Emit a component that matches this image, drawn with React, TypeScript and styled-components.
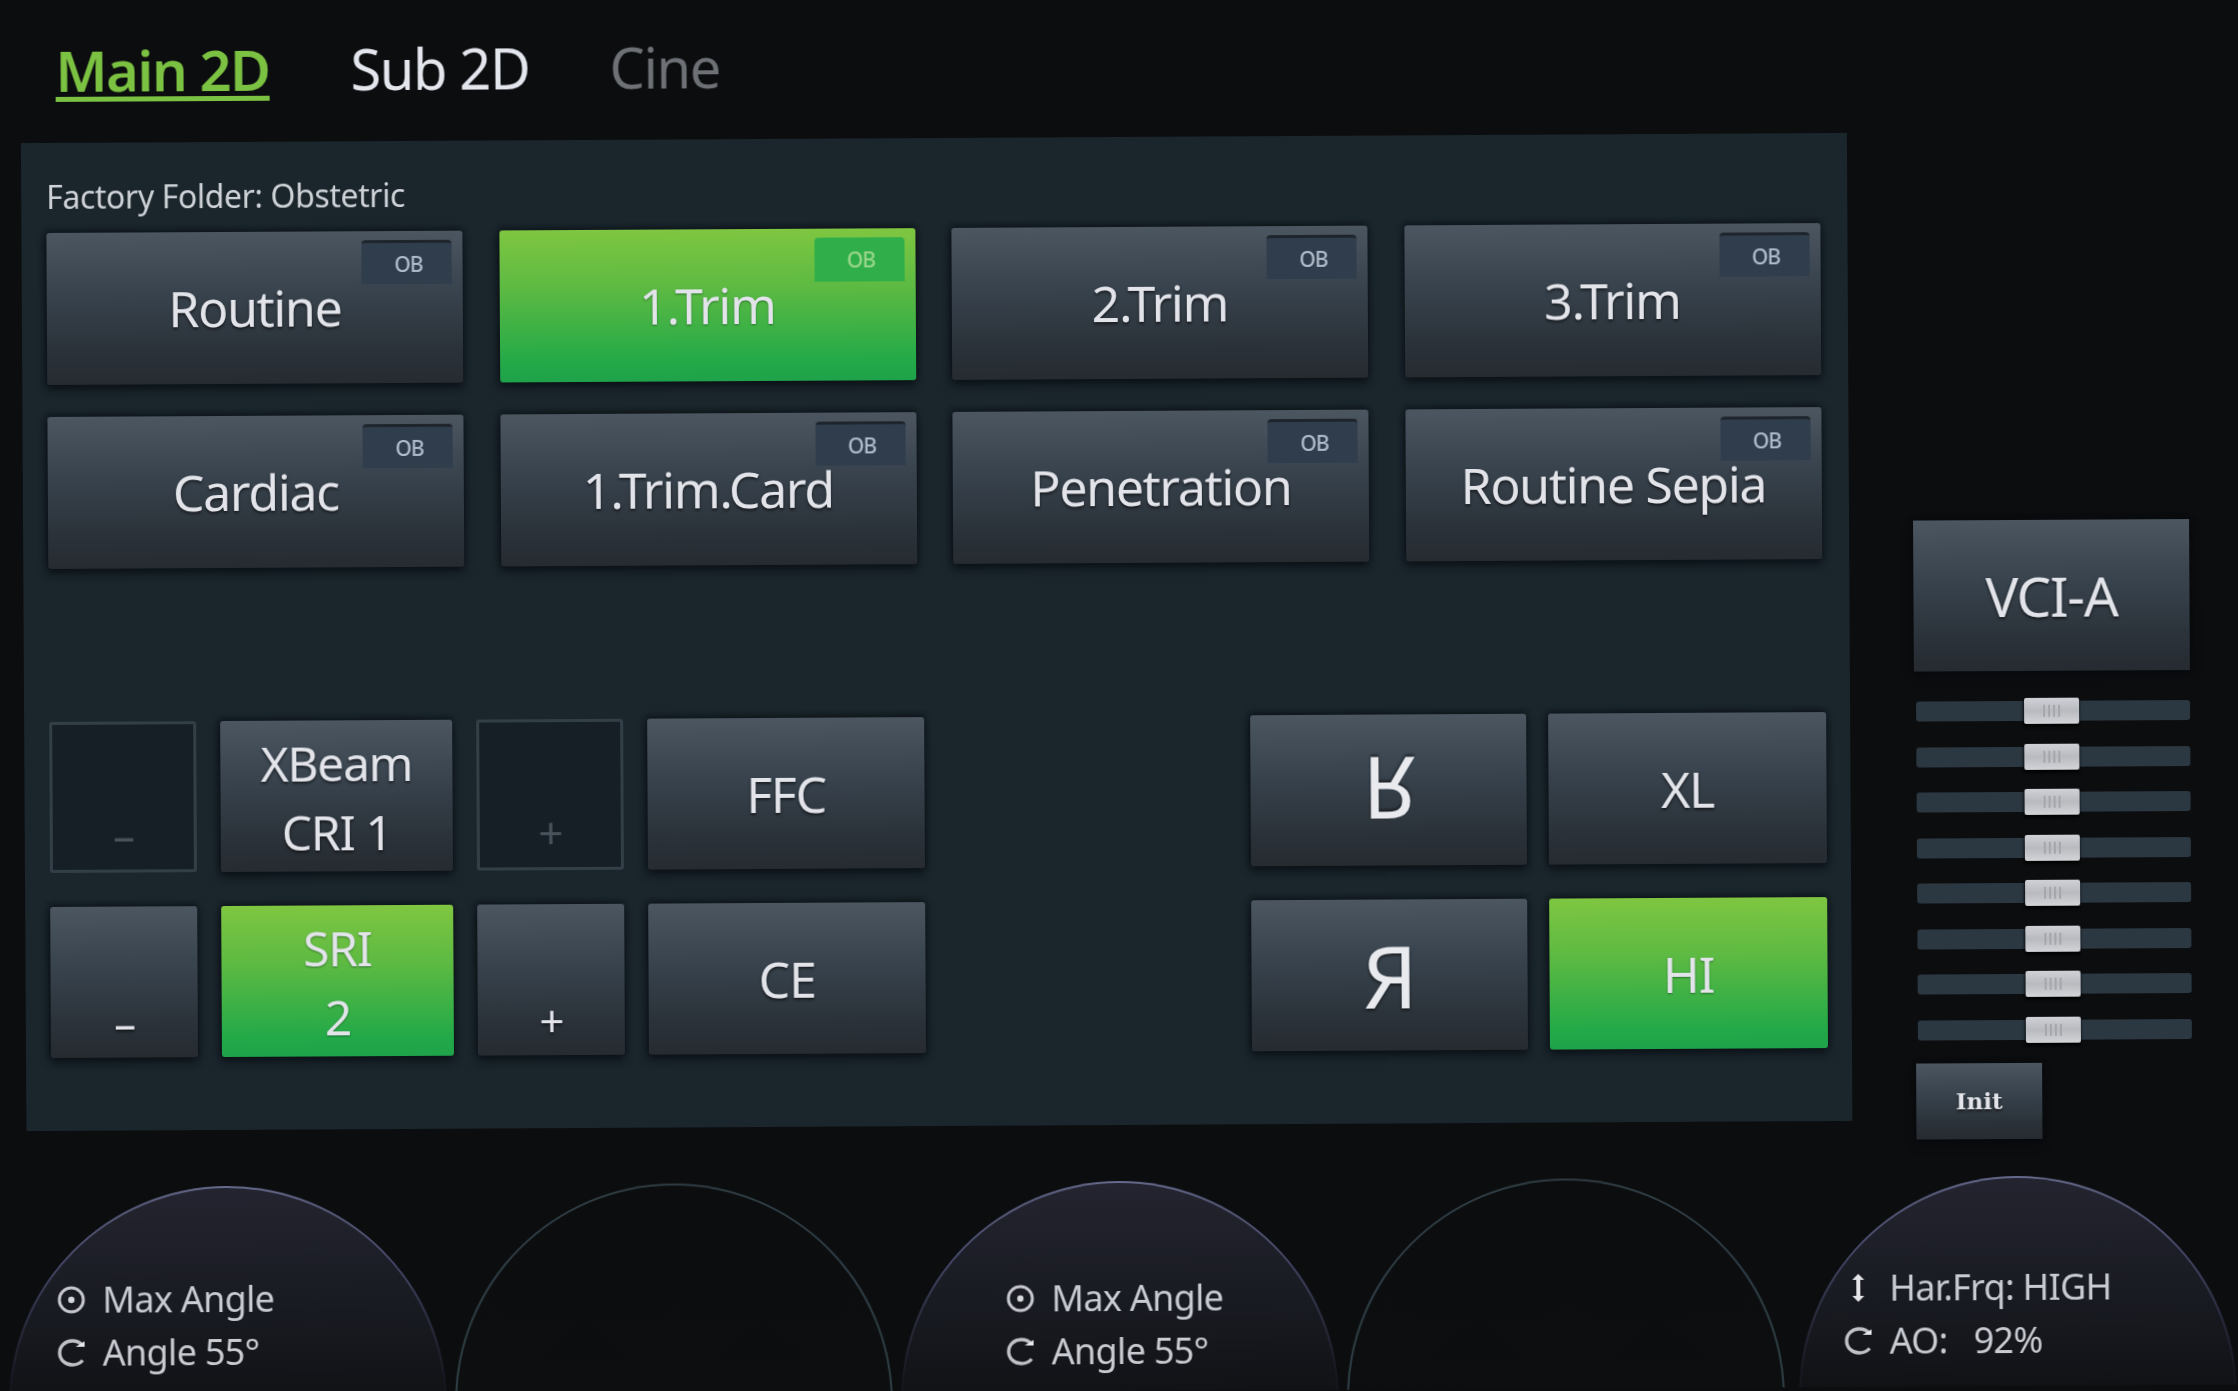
import React from "react";
import styled, { createGlobalStyle, css } from "styled-components";

const GlobalStyle = createGlobalStyle`
  html, body {
    margin: 0;
    padding: 0;
    background: #0c0d0f;
    overflow: hidden;
  }
  body {
    font-family: "Noto Sans", "Open Sans", sans-serif;
  }
`;

// the source is a slightly tilted photo of the screen, so the whole page leans a bit
const Stage = styled.div`
  width: 2238px;
  height: 1391px;
  display: flex;
  flex-direction: column;
  overflow: hidden;
  background: #0c0d0f;
  color: #e6e8ee;
  transform: rotate(-0.32deg);
  transform-origin: center;
  filter: blur(0.7px);
`;

const TopArea = styled.div`
  display: flex;
  height: 1181px;
  flex: none;
`;

const LeftColumn = styled.div`
  display: flex;
  flex-direction: column;
  width: 1889px;
  flex: none;
`;

const Tabs = styled.div`
  display: flex;
  height: 137px;
  padding: 34px 0 0 59px;
  box-sizing: border-box;
`;

const Tab = styled.div<{ $tone: "active" | "normal" | "dim"; $width: number }>`
  width: ${(p) => p.$width}px;
  height: 66px;
  font-size: 56px;
  line-height: 60px;
  letter-spacing: -1.4px;
  white-space: nowrap;
  ${(p) =>
    p.$tone === "active" &&
    css`
      color: #7cc242;
      font-weight: 600;
      span {
        display: inline-block;
        height: 57px;
        border-bottom: 5px solid #7cc242;
      }
    `}
  ${(p) => p.$tone === "normal" && "color: #e4e6ee;"}
  ${(p) => p.$tone === "dim" && "color: #6d7176;"}
`;

const Panel = styled.div`
  width: 1826px;
  height: 988px;
  margin-left: 24px;
  padding: 36px 0 0 25px;
  box-sizing: border-box;
  background: #1a252c;
`;

const FolderLabel = styled.div`
  height: 54px;
  font-size: 32px;
  line-height: 36px;
  letter-spacing: -0.4px;
  color: #cfd3d8;
`;

const PresetGrid = styled.div`
  display: grid;
  grid-template-columns: repeat(4, 416px);
  grid-auto-rows: 152px;
  column-gap: 36.5px;
  row-gap: 32px;
`;

const Key = styled.div<{ $on?: boolean; $size?: number }>`
  position: relative;
  display: flex;
  align-items: center;
  justify-content: center;
  box-sizing: border-box;
  font-size: ${(p) => p.$size ?? 50}px;
  letter-spacing: -1.3px;
  color: #e2e4ea;
  text-shadow: 0 2px 3px rgba(0, 0, 0, 0.55);
  border-radius: 3px;
  box-shadow: 0 5px 8px rgba(5, 9, 12, 0.65), 0 -2px 5px rgba(5, 9, 12, 0.4);
  background: ${(p) =>
    p.$on
      ? "linear-gradient(180deg, #7fc641 0%, #5dba42 38%, #22a948 88%, #1fa24a 100%)"
      : "linear-gradient(180deg, #4b5661 0%, #3a4550 35%, #2a3138 80%, #262b31 100%)"};
  ${(p) => p.$on && "text-shadow: 0 1px 2px rgba(20, 70, 30, 0.6);"}
`;

const Badge = styled.div<{ $on?: boolean }>`
  position: absolute;
  top: 9px;
  right: 11px;
  width: 90px;
  height: 44px;
  padding-left: 4px;
  box-sizing: border-box;
  display: flex;
  align-items: center;
  justify-content: center;
  border-radius: 4px 4px 0 0;
  font-size: 21px;
  letter-spacing: -0.8px;
  font-weight: 500;
  text-shadow: none;
  color: ${(p) => (p.$on ? "#9ad68b" : "#b0bbca")};
  background: ${(p) => (p.$on ? "#2fae4a" : "#2f3d4c")};
  ${(p) => !p.$on && "border-top: 3px solid #1e252c;"}
`;

const LowerArea = styled.div`
  display: flex;
  justify-content: space-between;
  width: 1777px;
  margin: 153px 0 0 0;
`;

const LeftCluster = styled.div`
  display: grid;
  grid-template-columns: 147px 232px 147px 277px;
  grid-auto-rows: 151px;
  column-gap: 24px;
  row-gap: 34px;
`;

const RightCluster = styled.div`
  display: grid;
  grid-template-columns: 276px 278px;
  grid-auto-rows: 151px;
  column-gap: 22px;
  row-gap: 34px;
`;

const StepKey = styled(Key)<{ $off?: boolean }>`
  align-items: flex-end;
  padding-bottom: 5px;
  font-size: 44px;
  ${(p) =>
    p.$off &&
    css`
      background: #161f25;
      border: 3px solid #333f47;
      color: #47525a;
      box-shadow: none;
      text-shadow: none;
    `}
`;

const TwoLine = styled.div`
  text-align: center;
  padding-top: 3px;
  line-height: 69px;
  font-size: 48px;
`;

const FlippedR = styled.span`
  display: inline-block;
  transform: scaleY(-1);
  font-size: 86px;
  line-height: 1;
  color: #e8eaee;
`;

const MirrorR = styled.span`
  font-size: 86px;
  line-height: 1;
  color: #e8eaee;
`;

const RightColumn = styled.div`
  display: flex;
  flex-direction: column;
  width: 276px;
  margin: 525px 0 0 25px;
`;

const BigKey = styled(Key)`
  height: 151px;
  border-radius: 0;
`;

const Sliders = styled.div`
  display: flex;
  flex-direction: column;
  gap: 25.5px;
  margin-top: 30px;
`;

const Track = styled.div`
  position: relative;
  height: 20px;
  margin-left: 2px;
  border-radius: 3px;
  background: #2b3741;
`;

const Thumb = styled.div`
  position: absolute;
  top: -3px;
  left: 108px;
  width: 55px;
  height: 26px;
  display: flex;
  align-items: center;
  justify-content: center;
  gap: 3px;
  border-radius: 2px;
  background: linear-gradient(180deg, #cfd1d6 0%, #b8babf 50%, #d2d4d8 100%);
  box-shadow: 0 3px 3px rgba(0, 0, 0, 0.8);
  i {
    display: block;
    width: 2px;
    height: 12px;
    background: #a4a6ab;
  }
`;

const InitKey = styled(Key)`
  width: 126px;
  height: 76px;
  margin: 23px 0 0 0;
  font-family: "DejaVu Serif", serif;
  font-size: 23px;
  font-weight: 700;
  letter-spacing: 0;
  border-radius: 0;
`;

const Dials = styled.div`
  display: flex;
  gap: 8px;
  margin-left: 5px;
`;

const Dial = styled.div<{ $filled?: boolean; $inset: number; $top: number }>`
  flex: none;
  width: 438px;
  height: 438px;
  box-sizing: border-box;
  border-radius: 50%;
  padding: ${(p) => p.$top}px 0 0 ${(p) => p.$inset}px;
  border: 2px solid transparent;
  &:last-child {
    margin-left: 6px;
  }
  ${(p) =>
    p.$filled
      ? css`
          background: linear-gradient(180deg, #23242f 0%, #16181e 35%, #0f1013 52%) padding-box,
            linear-gradient(180deg, #666a8c 0%, #3f4260 20%, #16171f 45%) border-box;
        `
      : css`
          background: linear-gradient(#0c0d0f, #0e0f11) padding-box,
            linear-gradient(180deg, #2f3c44 0%, #2e3f46 40%, #30404a 100%) border-box;
        `}
`;

const DialLine = styled.div`
  display: flex;
  align-items: center;
  height: 53px;
  font-size: 36px;
  letter-spacing: -0.7px;
  color: #c9cbd2;
  white-space: nowrap;
`;

const DialIcon = styled.svg`
  flex: none;
  width: 34px;
  height: 34px;
  margin-right: 14px;
`;

const TargetIcon = () => (
  <DialIcon viewBox="0 0 34 34" fill="none">
    <circle cx="17" cy="17" r="12" stroke="#c6c8ce" strokeWidth="3" />
    <circle cx="17" cy="17" r="3.2" fill="#d6d8dd" />
  </DialIcon>
);

const TurnIcon = () => (
  <DialIcon viewBox="0 0 34 34" fill="none">
    <path d="M28 9.5C25.5 6.5 21.8 5 17.5 5 10.5 5 5 10.2 5 17s5.5 12 12.5 12c4.3 0 8-1.6 10.5-4.5" stroke="#bfc1c7" strokeWidth="3.4" />
    <path d="M21 11h9V5.5z" fill="#e6e8ec" />
  </DialIcon>
);

const UpDownIcon = () => (
  <DialIcon viewBox="0 0 34 34" fill="none">
    <path d="M17 5v24" stroke="#e2e4e8" strokeWidth="4" />
    <path d="M11 9l6-6 6 6zM11 25h12l-6 6z" fill="#e2e4e8" />
  </DialIcon>
);

const presets = ["Routine", "1.Trim", "2.Trim", "3.Trim", "Cardiac", "1.Trim.Card", "Penetration", "Routine Sepia"];

const sliderRows = [0, 1, 2, 3, 4, 5, 6, 7];

export default function App() {
  return (
    <>
      <GlobalStyle />
      <Stage>
        <TopArea>
          <LeftColumn>
            <Tabs>
              <Tab $tone="active" $width={295}>
                <span>Main 2D</span>
              </Tab>
              <Tab $tone="normal" $width={259}>
                Sub 2D
              </Tab>
              <Tab $tone="dim" $width={120}>
                Cine
              </Tab>
            </Tabs>
            <Panel>
              <FolderLabel>Factory Folder: Obstetric</FolderLabel>
              <PresetGrid>
                {presets.map((name) => (
                  <Key key={name} $on={name === "1.Trim"}>
                    {name}
                    <Badge $on={name === "1.Trim"}>OB</Badge>
                  </Key>
                ))}
              </PresetGrid>
              <LowerArea>
                <LeftCluster>
                  <StepKey $off>–</StepKey>
                  <Key>
                    <TwoLine>
                      XBeam
                      <br />
                      CRI 1
                    </TwoLine>
                  </Key>
                  <StepKey $off>+</StepKey>
                  <Key>FFC</Key>
                  <StepKey>–</StepKey>
                  <Key $on>
                    <TwoLine>
                      SRI
                      <br />2
                    </TwoLine>
                  </Key>
                  <StepKey>+</StepKey>
                  <Key>CE</Key>
                </LeftCluster>
                <RightCluster>
                  <Key>
                    <FlippedR>R</FlippedR>
                  </Key>
                  <Key>XL</Key>
                  <Key>
                    <MirrorR>Я</MirrorR>
                  </Key>
                  <Key $on>HI</Key>
                </RightCluster>
              </LowerArea>
            </Panel>
          </LeftColumn>
          <RightColumn>
            <BigKey $size={55}>VCI-A</BigKey>
            <Sliders>
              {sliderRows.map((row) => (
                <Track key={row}>
                  <Thumb>
                    <i />
                    <i />
                    <i />
                    <i />
                  </Thumb>
                </Track>
              ))}
            </Sliders>
            <InitKey>Init</InitKey>
          </RightColumn>
        </TopArea>
        <Dials>
          <Dial $filled $inset={44} $top={84}>
            <DialLine>
              <TargetIcon />
              Max Angle
            </DialLine>
            <DialLine>
              <TurnIcon />
              Angle 55°
            </DialLine>
          </Dial>
          <Dial $inset={0} $top={0} />
          <Dial $filled $inset={101} $top={88}>
            <DialLine>
              <TargetIcon />
              Max Angle
            </DialLine>
            <DialLine>
              <TurnIcon />
              Angle 55°
            </DialLine>
          </Dial>
          <Dial $inset={0} $top={0} />
          <Dial $filled $inset={41} $top={82}>
            <DialLine>
              <UpDownIcon />
              Har.Frq: HIGH
            </DialLine>
            <DialLine>
              <TurnIcon />
              AO:&nbsp;&nbsp; 92%
            </DialLine>
          </Dial>
        </Dials>
      </Stage>
    </>
  );
}
